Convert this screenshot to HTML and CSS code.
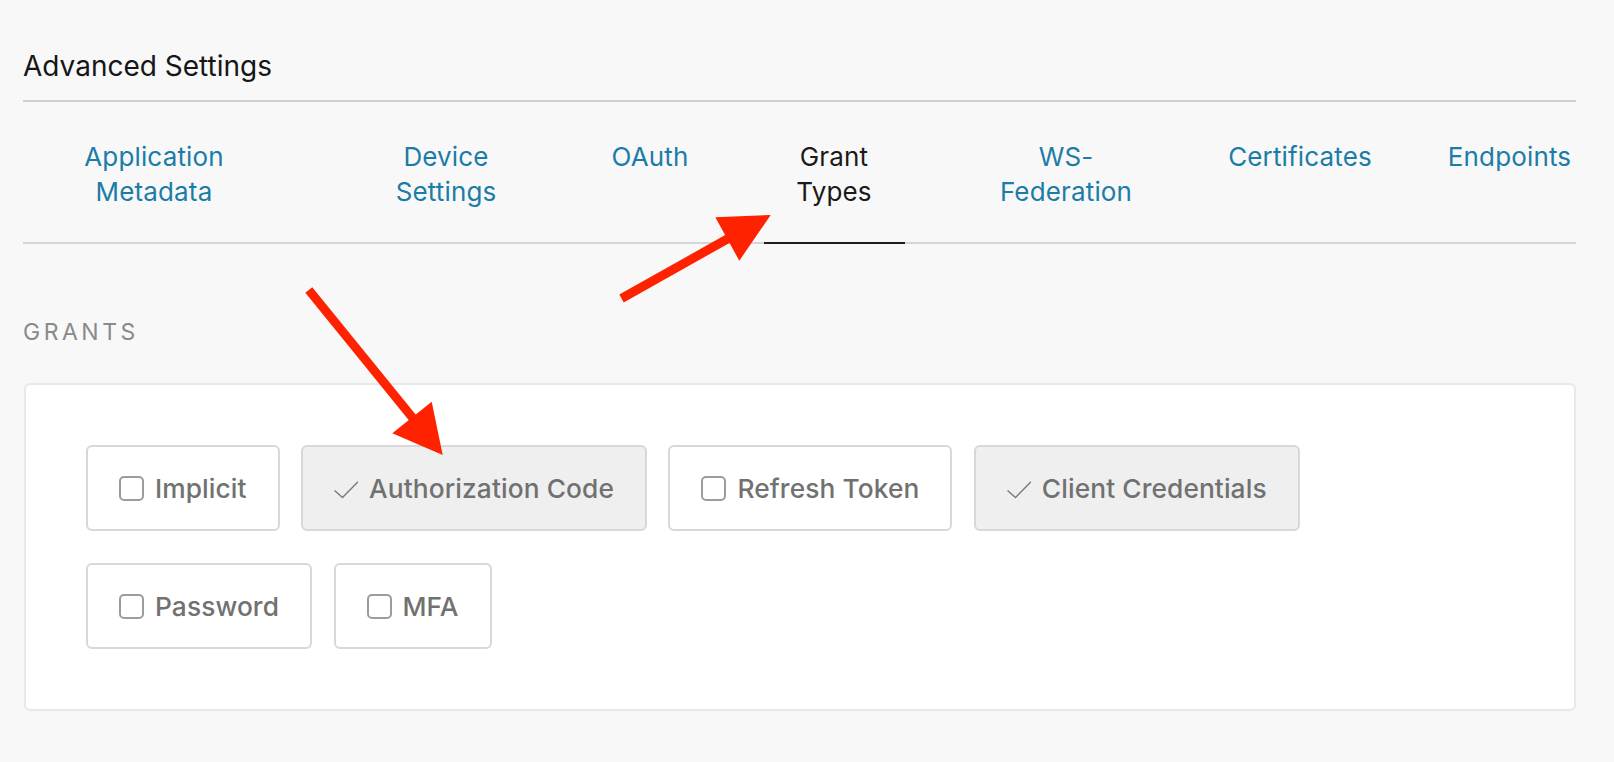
FILE: index.html
```html
<!DOCTYPE html>
<html lang="en">
<head>
<meta charset="utf-8">
<title>Advanced Settings</title>
<link rel="stylesheet" href="styles.css">
</head>
<body>
<div class="page">
  <h2 class="section-title">Advanced Settings</h2>
  <nav class="tabs">
    <a class="tab"><span class="tab-label">Application<br>Metadata</span></a>
    <a class="tab"><span class="tab-label">Device<br>Settings</span></a>
    <a class="tab"><span class="tab-label">OAuth</span></a>
    <a class="tab tab-active"><span class="tab-label">Grant<br>Types</span></a>
    <a class="tab"><span class="tab-label">WS-<br>Federation</span></a>
    <a class="tab"><span class="tab-label">Certificates</span></a>
    <a class="tab"><span class="tab-label">Endpoints</span></a>
  </nav>
  <div class="group-label">GRANTS</div>
  <div class="card">
    <div class="grant-list">
      <label class="grant"><span class="box"></span><span>Implicit</span></label>
      <label class="grant grant-on"><svg class="check" viewBox="0 0 24 18" width="24" height="18"><polyline points="0.5,9.5 8.5,16.5 24,0.8" fill="none" stroke="#7a7a7a" stroke-width="1.4"/></svg><span>Authorization Code</span></label>
      <label class="grant"><span class="box"></span><span>Refresh Token</span></label>
      <label class="grant grant-on"><svg class="check" viewBox="0 0 24 18" width="24" height="18"><polyline points="0.5,9.5 8.5,16.5 24,0.8" fill="none" stroke="#7a7a7a" stroke-width="1.4"/></svg><span>Client Credentials</span></label>
      <label class="grant"><span class="box"></span><span>Password</span></label>
      <label class="grant"><span class="box"></span><span>MFA</span></label>
    </div>
  </div>
</div>
<svg class="annotations" width="1614" height="762" viewBox="0 0 1614 762">
  <line x1="621.5" y1="298.5" x2="730" y2="237.5" stroke="#ff2200" stroke-width="9"/>
  <polygon points="715.3,217.3 770.7,215 739.3,260.7" fill="#ff2200"/>
  <line x1="308.8" y1="290" x2="416" y2="422" stroke="#ff2200" stroke-width="9"/>
  <polygon points="392.3,433.3 431.7,401.7 442.7,455" fill="#ff2200"/>
</svg>
</body>
</html>
```

FILE: styles.css
```css
* { box-sizing: border-box; }

html, body {
  margin: 0;
  background: #f8f8f8;
}

body {
  position: relative;
  font-family: "Inter", "Liberation Sans", sans-serif;
  min-height: 762px;
}

.page {
  padding: 0 38px 0 23px;
}

.section-title {
  margin: 0;
  padding: 49px 0 17px;
  font-size: 28px;
  line-height: 34px;
  font-weight: 400;
  color: #161616;
  border-bottom: 2px solid #cfcfcf;
}

.tabs {
  display: grid;
  grid-template-columns: 262px 322px 86px 282px 182px 286px 133px;
  border-bottom: 2px solid #d6d6d6;
}

.tab {
  display: flex;
  justify-content: center;
  text-align: center;
  font-size: 26px;
  line-height: 35px;
  letter-spacing: 0.15px;
  color: #1c7ca8;
  text-decoration: none;
}

.tab-label {
  display: block;
  padding: 37px 0 33px;
  margin-bottom: -2px;
  border-bottom: 2px solid transparent;
  white-space: nowrap;
}

.tab-active .tab-label {
  color: #1a1a1a;
  width: 141px;
  border-bottom-color: #1e1e1e;
}

.group-label {
  margin-top: 73px;
  font-size: 23px;
  line-height: 30px;
  letter-spacing: 3.5px;
  color: #8a8a8a;
}

.card {
  margin-top: 36px;
  margin-left: 1px;
  background: #fff;
  border: 2px solid #e8e8e8;
  border-radius: 6px;
  padding: 60px;
}

.grant-list {
  display: flex;
  flex-wrap: wrap;
  column-gap: 21.5px;
  row-gap: 32px;
}

.grant {
  display: flex;
  align-items: center;
  gap: 11px;
  height: 86px;
  padding: 0 31px;
  border: 2px solid #d8d8d8;
  border-radius: 6px;
  background: #fff;
  font-size: 26.3px;
  letter-spacing: 0.1px;
  font-weight: 500;
  color: #717171;
}

.grant-on {
  background: #efefef;
}

.box {
  width: 25px;
  height: 25px;
  border: 2px solid #9c9c9c;
  border-radius: 5px;
  flex: none;
}

.check {
  flex: none;
  margin-top: 4px;
}

.annotations {
  position: absolute;
  top: 0;
  left: 0;
  pointer-events: none;
}
```
